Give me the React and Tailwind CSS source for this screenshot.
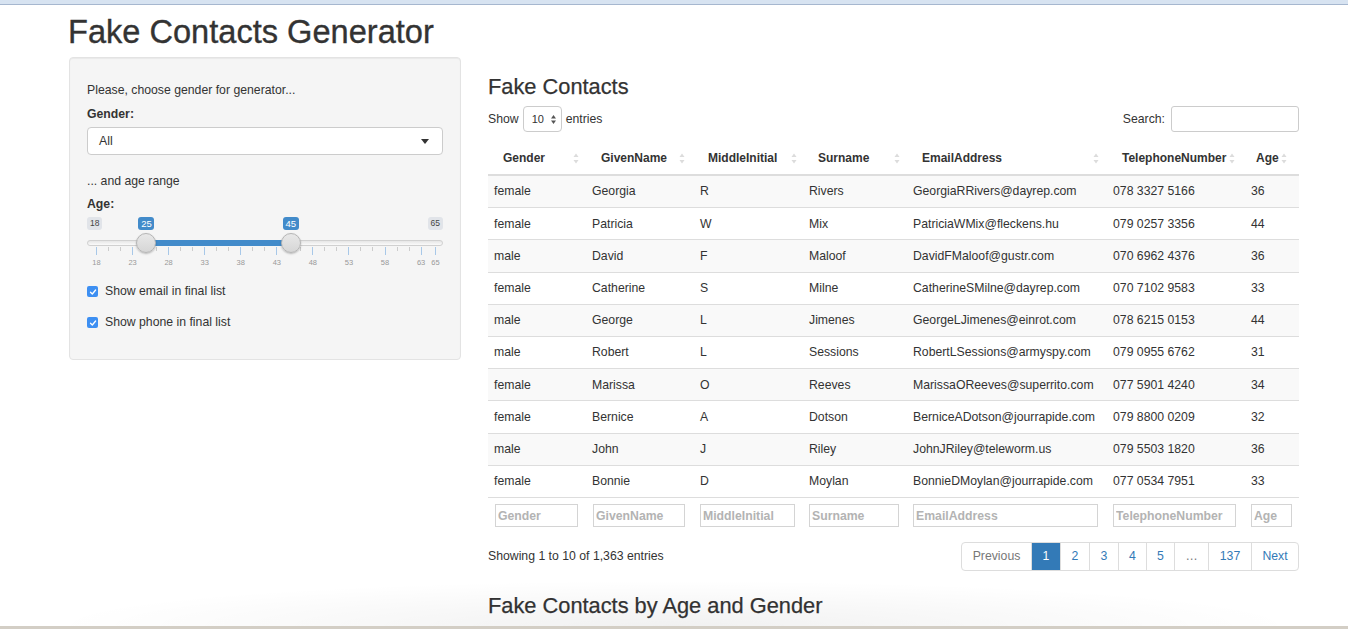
import React from "react";

const rows = [
  ["female", "Georgia", "R", "Rivers", "GeorgiaRRivers@dayrep.com", "078 3327 5166", "36"],
  ["female", "Patricia", "W", "Mix", "PatriciaWMix@fleckens.hu", "079 0257 3356", "44"],
  ["male", "David", "F", "Maloof", "DavidFMaloof@gustr.com", "070 6962 4376", "36"],
  ["female", "Catherine", "S", "Milne", "CatherineSMilne@dayrep.com", "070 7102 9583", "33"],
  ["male", "George", "L", "Jimenes", "GeorgeLJimenes@einrot.com", "078 6215 0153", "44"],
  ["male", "Robert", "L", "Sessions", "RobertLSessions@armyspy.com", "079 0955 6762", "31"],
  ["female", "Marissa", "O", "Reeves", "MarissaOReeves@superrito.com", "077 5901 4240", "34"],
  ["female", "Bernice", "A", "Dotson", "BerniceADotson@jourrapide.com", "079 8800 0209", "32"],
  ["male", "John", "J", "Riley", "JohnJRiley@teleworm.us", "079 5503 1820", "36"],
  ["female", "Bonnie", "D", "Moylan", "BonnieDMoylan@jourrapide.com", "077 0534 7951", "33"],
];

const cols = [
  { name: "Gender", hpl: "pl-[15px]", icon: "right-[7px]", fpl: "pl-[7px]", fw: "w-[83px]" },
  { name: "GivenName", hpl: "pl-[15px]", icon: "right-[9px]", fpl: "pl-[7px]", fw: "w-[92px]" },
  { name: "MiddleInitial", hpl: "pl-[14px]", icon: "right-[6px]", fpl: "pl-[6px]", fw: "w-[95px]" },
  { name: "Surname", hpl: "pl-[15px]", icon: "right-[7px]", fpl: "pl-[6px]", fw: "w-[90px]" },
  { name: "EmailAddress", hpl: "pl-[15px]", icon: "right-[8px]", fpl: "pl-[6px]", fw: "w-[185px]" },
  { name: "TelephoneNumber", hpl: "pl-[15px]", icon: "right-[10px]", fpl: "pl-[6px]", fw: "w-[123px]" },
  { name: "Age", hpl: "pl-[11px]", icon: "right-[12px]", fpl: "pl-[6px]", fw: "w-[41px]" },
];

const GRID = "grid grid-cols-[98px_108px_109px_104px_200px_138px_54px]";

function SortIcon({ className }) {
  return (
    <svg className={className} width="6" height="11" viewBox="0 0 6 11">
      <path d="M3 0.5 L5.5 4 L0.5 4 Z" fill="#dcdcdc" />
      <path d="M0.5 7 L5.5 7 L3 10.5 Z" fill="#dcdcdc" />
    </svg>
  );
}

function CheckBox() {
  return (
    <span className="flex h-[11px] w-[11px] items-center justify-center rounded-[2px] bg-[#3d8ff2]">
      <svg width="8" height="8" viewBox="0 0 8 8">
        <path d="M1.5 4.2 L3.3 6 L6.6 2" fill="none" stroke="white" strokeWidth="1.3" strokeLinecap="round" strokeLinejoin="round" />
      </svg>
    </span>
  );
}

const pos = (v) => 9 + (v - 18) * 7.213;

function Slider() {
  const majors = [18, 23, 28, 33, 38, 43, 48, 53, 58, 63, 65];
  const minors = [];
  for (let m = 18; m < 63; m += 5) {
    minors.push(m + 5 / 3, m + 10 / 3);
  }
  const a = pos(25);
  const b = pos(45);
  return (
    <div className="relative h-[58px] w-[356px]">
      <span className="absolute left-0 top-[4px] h-[13px] rounded-[3px] bg-[#e1e4e9] px-[3px] text-[8.5px] leading-[13px] text-[#444]">18</span>
      <span className="absolute right-0 top-[4px] h-[13px] rounded-[3px] bg-[#e1e4e9] px-[3px] text-[8.5px] leading-[13px] text-[#444]">65</span>
      <span className="absolute top-[4px] h-[13px] w-[16px] -translate-x-1/2 rounded-[3px] bg-[#428bca] text-center text-[9.5px] leading-[13px] text-white" style={{ left: a }}>25</span>
      <span className="absolute top-[4px] h-[13px] w-[16px] -translate-x-1/2 rounded-[3px] bg-[#428bca] text-center text-[9.5px] leading-[13px] text-white" style={{ left: b }}>45</span>
      <div className="absolute left-0 right-0 top-[27px] h-[6px] rounded-full border border-[#d0d0d0] bg-[linear-gradient(#e6e6e6,#fafafa)]" />
      <div className="absolute top-[27px] h-[6px] bg-[#428bca]" style={{ left: a, width: b - a }} />
      {minors.map((m, i) => (
        <span key={"n" + i} className="absolute top-[34px] h-[4px] w-px bg-[#ccc]" style={{ left: pos(m) }} />
      ))}
      {majors.map((m) => (
        <span key={"j" + m} className="absolute top-[34px] h-[8px] w-px bg-[#a8c8e8]" style={{ left: pos(m) }} />
      ))}
      {majors.map((m) => (
        <span key={"l" + m} className="absolute top-[45px] w-[20px] -translate-x-1/2 text-center text-[7.5px] leading-[9px] text-[#999]" style={{ left: pos(m) + 0.5 }}>{m}</span>
      ))}
      <span className="absolute top-[20px] h-[20px] w-[20px] -translate-x-1/2 rounded-full border border-[#b5b5b5] bg-[linear-gradient(#e8e8e8,#d6d6d6)] shadow-[0_1px_2px_rgba(0,0,0,0.25)]" style={{ left: a }} />
      <span className="absolute top-[20px] h-[20px] w-[20px] -translate-x-1/2 rounded-full border border-[#b5b5b5] bg-[linear-gradient(#e8e8e8,#d6d6d6)] shadow-[0_1px_2px_rgba(0,0,0,0.25)]" style={{ left: b }} />
    </div>
  );
}

function Sidebar() {
  return (
    <div className="h-[303px] w-[392px] shrink-0 rounded-[4px] border border-[#e3e3e3] bg-[#f5f5f5] pl-[17px] pr-[17px] pt-[24px] shadow-[inset_0_1px_1px_rgba(0,0,0,0.05)]">
      <p className="text-[12.25px] leading-[17px]">Please, choose gender for generator...</p>
      <p className="mt-[7px] text-[12.25px] font-bold leading-[17px]">Gender:</p>
      <div className="mt-[4px] flex h-[28px] w-[356px] items-center justify-between rounded-[4px] border border-[#ccc] bg-white pl-[11px] pr-[13px] text-[12.25px]">
        <span>All</span>
        <svg width="8" height="5" viewBox="0 0 8 5">
          <path d="M0 0 L8 0 L4 5 Z" fill="#333" />
        </svg>
      </div>
      <p className="mt-[18px] text-[12.25px] leading-[17px]">... and age range</p>
      <p className="mt-[6px] text-[12.25px] font-bold leading-[17px]">Age:</p>
      <Slider />
      <label className="mt-[12px] flex h-[17px] items-center gap-[7px] text-[12.25px]">
        <CheckBox />
        <span>Show email in final list</span>
      </label>
      <label className="mt-[14px] flex h-[17px] items-center gap-[7px] text-[12.25px]">
        <CheckBox />
        <span>Show phone in final list</span>
      </label>
    </div>
  );
}

function Pagination() {
  const items = [
    { t: "Previous", w: "w-[69px]", c: "text-[#777]" },
    { t: "1", w: "w-[29px]", c: "bg-[#337ab7] text-white" },
    { t: "2", w: "w-[29px]", c: "text-[#337ab7]" },
    { t: "3", w: "w-[29px]", c: "text-[#337ab7]" },
    { t: "4", w: "w-[28px]", c: "text-[#337ab7]" },
    { t: "5", w: "w-[28px]", c: "text-[#337ab7]" },
    { t: "…", w: "w-[34px]", c: "text-[#777]" },
    { t: "137", w: "w-[43px]", c: "text-[#337ab7]" },
    { t: "Next", w: "w-[47px]", c: "text-[#337ab7]" },
  ];
  return (
    <div className="flex h-[29px] overflow-hidden rounded-[4px] border border-[#ddd]">
      {items.map((it, i) => (
        <span
          key={i}
          className={`flex h-full items-center justify-center text-[12.25px] ${it.w} ${it.c} ${i > 0 ? "border-l border-[#ddd]" : ""}`}
        >
          {it.t}
        </span>
      ))}
    </div>
  );
}

function ContactsTable() {
  return (
    <div className="mt-[10px] w-[811px]">
      <div className={`${GRID} h-[34px] border-b-2 border-[#ddd]`}>
        {cols.map((c) => (
          <div key={c.name} className={`relative flex items-center ${c.hpl} text-[12px] font-bold`}>
            <span className="whitespace-nowrap">{c.name}</span>
            <SortIcon className={`absolute top-[11px] ${c.icon}`} />
          </div>
        ))}
      </div>
      {rows.map((r, i) => (
        <div key={i} className={`${GRID} h-[32.2px] border-b border-[#ddd] ${i % 2 === 0 ? "bg-[#f9f9f9]" : "bg-white"}`}>
          {r.map((cell, j) => (
            <div key={j} className="flex items-center whitespace-nowrap pl-[6px] text-[12.25px]">
              {cell}
            </div>
          ))}
        </div>
      ))}
      <div className={`${GRID} h-[37px] pt-[5px]`}>
        {cols.map((c) => (
          <div key={c.name} className={c.fpl}>
            <input
              readOnly
              placeholder={c.name}
              className={`h-[23px] ${c.fw} border border-[#d4d4d4] bg-white px-[2px] text-[12.25px] font-bold outline-none placeholder:text-[#b3b3b3]`}
            />
          </div>
        ))}
      </div>
      <div className="mt-[7px] flex items-center justify-between">
        <span className="text-[12.25px]">Showing 1 to 10 of 1,363 entries</span>
        <Pagination />
      </div>
    </div>
  );
}

function MainPanel() {
  return (
    <div className="w-[811px] shrink-0">
      <h3 className="mt-[19px] text-[21.8px] leading-[22px] [-webkit-text-stroke:0.25px_#333]">Fake Contacts</h3>
      <div className="mt-[8px] flex h-[26px] items-center justify-between text-[12.25px]">
        <div className="flex items-center">
          <span>Show</span>
          <span className="mx-[4px] flex h-[26px] w-[39px] items-center justify-between rounded-[4px] border border-[#ccc] bg-white pl-[8px] pr-[5px] text-[11px]">
            <span>10</span>
            <svg width="5" height="9" viewBox="0 0 5 9">
              <path d="M2.5 0 L5 3.5 L0 3.5 Z" fill="#555" />
              <path d="M0 5.5 L5 5.5 L2.5 9 Z" fill="#555" />
            </svg>
          </span>
          <span>entries</span>
        </div>
        <div className="flex items-center gap-[6px]">
          <span>Search:</span>
          <span className="h-[26px] w-[128px] rounded-[3px] border border-[#ccc] bg-white" />
        </div>
      </div>
      <ContactsTable />
      <h3 className="mt-[24px] text-[21.8px] leading-[22px] [-webkit-text-stroke:0.25px_#333]">Fake Contacts by Age and Gender</h3>
    </div>
  );
}

export default function App() {
  return (
    <div className="relative flex h-[629px] w-full flex-col overflow-hidden bg-white font-['Liberation_Sans',Arial,sans-serif] text-[#333]">
      <div className="h-[5px] shrink-0 border-b border-[#a6b7cf] bg-[#d7e3f1]" />
      <div className="flex-1 overflow-hidden pl-[69px]">
        <h1 className="ml-[-1px] mt-[11px] text-[32.6px] font-normal leading-[32px] [-webkit-text-stroke:0.35px_#333]">Fake Contacts Generator</h1>
        <div className="mt-[9px] flex gap-[27px]">
          <Sidebar />
          <MainPanel />
        </div>
      </div>
      <div className="pointer-events-none absolute bottom-[3px] left-[60px] right-[60px] h-[45px] bg-[radial-gradient(ellipse_at_bottom,rgba(0,0,0,0.055),rgba(0,0,0,0)_72%)]" />
      <div className="relative h-[3px] shrink-0 bg-[#d3cec5]" />
    </div>
  );
}
